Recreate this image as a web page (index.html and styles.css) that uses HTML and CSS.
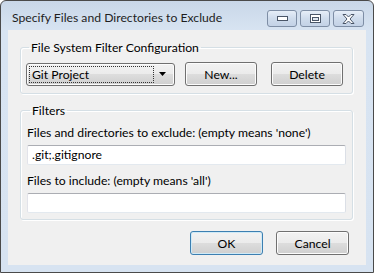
FILE: index.html
```html
<!DOCTYPE html>
<html lang="en">
    <head>
        <meta charset="UTF-8">
        <title>Specify Files and Directories to Exclude</title>
        <link rel="stylesheet" href="styles.css">
    </head>
    <body>
        <div class="window">
            <div class="titlebar">
                <span class="title">Specify Files and Directories to Exclude</span>
                <div class="caption-buttons">
                    <span class="cap-btn">
                        <svg width="11" height="5" viewBox="0 0 11 5"><rect x="0.5" y="0.5" width="10" height="4" fill="#fff" stroke="#4a5668"/></svg>
                    </span>
                    <span class="cap-btn">
                        <svg width="11" height="9" viewBox="0 0 11 9"><rect x="0.5" y="0.5" width="10" height="8" fill="#fff" stroke="#4a5668"/><rect x="2.5" y="3.5" width="6" height="3" fill="#dfe7f1" stroke="#4a5668"/></svg>
                    </span>
                    <span class="cap-btn">
                        <svg width="13" height="10" viewBox="0 0 13 10"><path d="M1 0.5h3l2.5 2.5 2.5-2.5h3l-4 4.5 4 4.5h-3l-2.5-2.5-2.5 2.5h-3l4-4.5z" fill="#fff" stroke="#4a5668"/></svg>
                    </span>
                </div>
            </div>
            <div class="client">
                <fieldset class="group">
                    <legend>File System Filter Configuration</legend>
                    <div class="config-row">
                        <div class="combo">
                            <span class="combo-text">Git Project</span>
                            <svg class="combo-arrow" width="7" height="4" viewBox="0 0 7 4"><path d="M0 0h7l-3.5 4z" fill="#000"/></svg>
                        </div>
                        <button class="btn btn-new">New...</button>
                        <button class="btn btn-delete">Delete</button>
                    </div>
                </fieldset>
                <fieldset class="group filters">
                    <legend>Filters</legend>
                    <label class="field-label">Files and directories to exclude: (empty means 'none')</label>
                    <div class="textbox">.git;.gitignore</div>
                    <label class="field-label">Files to include: (empty means 'all')</label>
                    <div class="textbox"></div>
                </fieldset>
                <div class="actions">
                    <button class="btn btn-default">OK</button>
                    <button class="btn">Cancel</button>
                </div>
            </div>
        </div>
    </body>
</html>
```

FILE: styles.css
```css
* {
    box-sizing: border-box;
}

body {
    margin: 0;
    font-family: Lato, "Noto Sans", sans-serif;
    font-size: 12.2px;
    color: #000;
    background: #fff;
}

.window {
    width: 374px;
    height: 273px;
    border: 1px solid #4a4a4a;
    border-radius: 6px 6px 0 0;
    background: linear-gradient(#c9d7e8, #d8e4f2 30px, #d7e3f1);
    padding: 0 7px 7px 7px;
    display: flex;
    flex-direction: column;
}

.titlebar {
    height: 29px;
    display: flex;
    align-items: flex-start;
    padding-left: 4px;
}

.title {
    flex: 1;
    color: #1e1e1e;
    line-height: 16px;
    margin-top: 9px;
}

.caption-buttons {
    display: flex;
    gap: 3px;
    margin-top: 9px;
    margin-right: 2px;
}

.cap-btn {
    width: 30px;
    height: 17px;
    border: 1px solid #7e8ea5;
    border-radius: 3px;
    background: linear-gradient(#e6eef8, #cfdcec 50%, #c3d2e6);
    display: flex;
    align-items: center;
    justify-content: center;
}

.cap-btn:last-child {
    width: 31px;
}

.client {
    flex: 1;
    background: #f0f0f0;
    padding: 10px 13px 0 12px;
}

.group {
    margin: 0;
    border: 1px solid #d5dfe5;
    border-radius: 3px;
    box-shadow: inset 1px 1px 0 #fff, 1px 1px 0 #fff;
    padding: 7px 8px 7px 5px;
}

.group legend {
    padding: 0 2px;
    margin-left: 3px;
    line-height: 15px;
}

.config-row {
    display: flex;
    align-items: center;
}

.btn {
    font-family: inherit;
    font-size: inherit;
    color: #000;
    height: 24px;
    border: 1px solid #707070;
    border-radius: 3px;
    background: linear-gradient(#f2f2f2, #ebebeb 50%, #dddddd 50%, #cfcfcf);
    box-shadow: inset 0 0 0 1px #fcfcfc;
    padding: 0;
}

.combo {
    width: 149px;
    height: 23px;
    border: 1px solid #707070;
    border-radius: 3px;
    background: linear-gradient(#f2f2f2, #ebebeb 50%, #dddddd 50%, #cfcfcf);
    box-shadow: inset 0 0 0 1px #fcfcfc;
    display: flex;
    align-items: center;
    padding: 2px 8px 2px 2px;
}

.combo-text {
    flex: 1;
    height: 17px;
    line-height: 15px;
    border: 1px dotted #333;
    padding-left: 2px;
}

.combo-arrow {
    margin-left: 5px;
}

.btn-new {
    width: 72px;
    margin-left: 10px;
}

.btn-delete {
    width: 72px;
    margin-left: 14px;
}

.filters {
    margin-top: 9px;
    padding: 7px 6px 6px 6px;
}

.field-label {
    display: block;
    line-height: 16px;
    margin-bottom: 4px;
}

.textbox {
    height: 20px;
    background: #fff;
    border: 1px solid #e3e9ef;
    border-top-color: #abadb3;
    border-left-color: #e2e3ea;
    border-right-color: #dbdfe6;
    border-radius: 2px;
    line-height: 17px;
    padding-left: 4px;
}

.textbox + .field-label {
    margin-top: 8px;
}

.actions {
    display: flex;
    justify-content: flex-end;
    gap: 13px;
    margin-top: 11px;
    padding-right: 4px;
}

.actions .btn {
    width: 73px;
}

.btn-default {
    border-color: #3c7fb1;
    box-shadow: inset 0 0 0 1px #cfeaf7;
    width: 71px;
}
```
